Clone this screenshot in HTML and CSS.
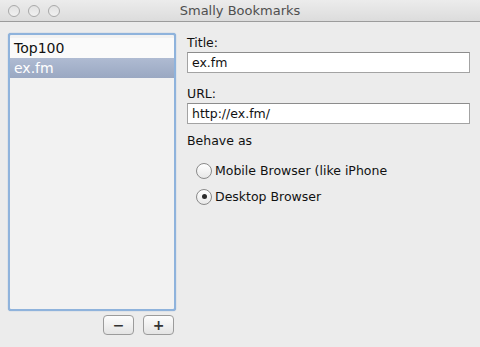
FILE: index.html
```html
<!DOCTYPE html>
<html lang="en">
<head>
    <meta charset="UTF-8">
    <meta name="viewport" content="width=device-width, initial-scale=1.0">
    <title>Smally Bookmarks</title>
    <link rel="stylesheet" href="styles.css">
</head>
<body>
    <div class="window">
        <div class="titlebar">
            <div class="lights">
                <span class="light"></span>
                <span class="light"></span>
                <span class="light"></span>
            </div>
            <div class="title">Smally Bookmarks</div>
        </div>
        <div class="content">
            <div class="sidebar">
                <ul class="list">
                    <li class="row">Top100</li>
                    <li class="row selected">ex.fm</li>
                </ul>
                <div class="list-buttons">
                    <button class="small-btn">&minus;</button>
                    <button class="small-btn">+</button>
                </div>
            </div>
            <div class="form">
                <label class="label" for="title-box">Title:</label>
                <input class="field" id="title-box" type="text" value="ex.fm">
                <label class="label" for="url-box">URL:</label>
                <input class="field last" id="url-box" type="text" value="http://ex.fm/">
                <div class="label">Behave as</div>
                <div class="radios">
                    <div class="radio-row">
                        <span class="radio"></span>
                        <span>Mobile Browser (like iPhone</span>
                    </div>
                    <div class="radio-row">
                        <span class="radio checked"></span>
                        <span>Desktop Browser</span>
                    </div>
                </div>
            </div>
        </div>
    </div>
</body>
</html>
```

FILE: styles.css
```css
body {
    margin: 0;
    font-family: "DejaVu Sans", "Liberation Sans", sans-serif;
    font-size: 12.5px;
    color: #111;
}
.window {
    width: 480px;
    height: 347px;
    background-color: #ececec;
    overflow: hidden;
}
.titlebar {
    height: 21px;
    border-bottom: 1px solid #9c9c9c;
    background: linear-gradient(#ececec, #dcdcdc);
    display: flex;
    align-items: center;
    position: relative;
}
.lights {
    display: flex;
    gap: 8px;
    padding-left: 8px;
}
.light {
    width: 10px;
    height: 10px;
    border: 1px solid #a9a9a9;
    border-radius: 50%;
    background: linear-gradient(#e2e2e2, #f1f1f1);
}
.title {
    position: absolute;
    left: 0;
    right: 0;
    text-align: center;
    font-size: 13px;
    color: #4f4f4f;
}
.content {
    display: flex;
    padding: 11px 0 0 8px;
}
.sidebar {
    width: 168px;
    display: flex;
    flex-direction: column;
}
.list {
    list-style: none;
    margin: 0;
    padding: 3px 0 0 0;
    height: 271px;
    border: 2px solid #8fb3dc;
    border-radius: 3px;
    box-shadow: 0 0 1px #6e9acd;
    background-color: #f2f2f2;
}
.row {
    height: 20px;
    line-height: 20px;
    padding-left: 4px;
    font-size: 14px;
    background-color: #fafafa;
}
.row.selected {
    background: linear-gradient(#afbbd2, #9aa8c2);
    color: #fff;
}
.list-buttons {
    display: flex;
    justify-content: flex-end;
    gap: 9px;
    padding: 4px 2px 0 0;
}
.small-btn {
    width: 31px;
    height: 20px;
    padding: 0;
    border: 1px solid #9b9b9b;
    border-radius: 4px;
    background: linear-gradient(#fdfdfd, #e4e4e4);
    font-family: "DejaVu Sans", sans-serif;
    font-size: 14px;
    font-weight: bold;
    color: #333;
    line-height: 16px;
}
.form {
    display: flex;
    flex-direction: column;
    padding-left: 11px;
    width: 283px;
}
.label {
    display: block;
    margin-top: 2px;
    height: 17px;
}
.field {
    box-sizing: border-box;
    width: 283px;
    height: 21px;
    margin: 0 0 11px 0;
    padding: 0 4px;
    border: 1px solid #a3a3a3;
    border-top-color: #8c8c8c;
    background: #fff;
    font-family: "DejaVu Sans", sans-serif;
    font-size: 12.5px;
    color: #111;
}
.field.last {
    margin-bottom: 7px;
}
.radios {
    display: flex;
    flex-direction: column;
    gap: 9px;
    padding: 12px 0 0 9px;
}
.radio-row {
    display: flex;
    align-items: center;
    gap: 3px;
    height: 17px;
}
.radio {
    box-sizing: border-box;
    width: 16px;
    height: 16px;
    border: 1px solid #8a8a8a;
    border-radius: 50%;
    background: linear-gradient(#ffffff, #e8e8e8);
    display: flex;
    align-items: center;
    justify-content: center;
}
.radio.checked::after {
    content: "";
    width: 5px;
    height: 5px;
    border-radius: 50%;
    background-color: #2b2b2b;
}
```
